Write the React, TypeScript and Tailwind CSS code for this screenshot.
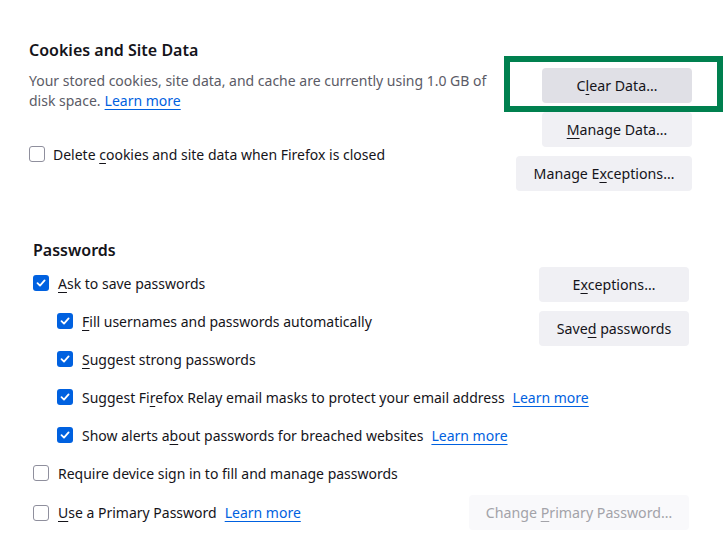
import React from "react";

const font = { fontFamily: '"Noto Sans", "Open Sans", sans-serif' };

function Check({ checked }: { checked?: boolean }) {
  if (checked) {
    return (
      <span className="flex h-4 w-4 shrink-0 items-center justify-center rounded-[3px] bg-[#0061e0]">
        <svg width="12" height="12" viewBox="0 0 12 12" fill="none">
          <path d="M2.5 6.2 L5 8.6 L9.6 3.4" stroke="white" strokeWidth="1.8" strokeLinecap="round" strokeLinejoin="round" />
        </svg>
      </span>
    );
  }
  return <span className="block h-4 w-4 shrink-0 rounded-[3px] border border-[#8f8f9d] bg-white" />;
}

function U({ children }: { children: React.ReactNode }) {
  return <span className="underline decoration-1 underline-offset-[3px]">{children}</span>;
}

function Link() {
  return <a className="ml-2 text-[#0061e0] underline decoration-1 underline-offset-[3px]">Learn more</a>;
}

function Btn({ children, w, hover, disabled }: { children: React.ReactNode; w: string; hover?: boolean; disabled?: boolean }) {
  const cls = disabled
    ? "bg-[#f9f9fb] text-[#a3a3a9]"
    : hover
    ? "bg-[#e0e0e6] text-[#15141a]"
    : "bg-[#f0f0f4] text-[#15141a]";
  return (
    <div className={`flex h-[35px] items-center justify-center rounded-[4px] text-[14.2px] ${w} ${cls}`}>
      <span className="whitespace-nowrap">{children}</span>
    </div>
  );
}

function Row({ checked, indent, className, children }: { checked?: boolean; indent?: boolean; className?: string; children: React.ReactNode }) {
  return (
    <div className={`flex h-[38px] items-center gap-[9px] ${indent ? "pl-6" : ""} ${className ?? ""}`}>
      <Check checked={checked} />
      <span className="whitespace-nowrap">{children}</span>
    </div>
  );
}

export default function App() {
  return (
    <div className="relative h-[534px] w-[727px] overflow-hidden bg-white text-[14px] text-[#15141a]" style={font}>
      {/* Cookies and Site Data */}
      <section className="pl-[29px] pr-[35px] pt-[39px]">
        <h2 className="h-[22px] text-[16px] font-semibold leading-[22px]">Cookies and Site Data</h2>
        <div className="mt-[7px] flex justify-between">
          <div>
            <p className="pt-[3px] leading-[20px] text-[#5b5b66] whitespace-nowrap">
              Your stored cookies, site data, and cache are currently using 1.0 GB of
              <br />
              disk space.
              <a className="ml-1 text-[#0061e0] underline decoration-1 underline-offset-[3px]">Learn more</a>
            </p>
            <div className="mt-[31px] flex h-6 items-center gap-2">
              <Check />
              <span className="whitespace-nowrap">
                Delete <U>c</U>ookies and site data when Firefox is closed
              </span>
            </div>
          </div>
          <div className="flex flex-col items-end gap-[9px]">
            <Btn w="w-[150px]" hover>
              C<U>l</U>ear Data…
            </Btn>
            <Btn w="w-[150px]">
              <U>M</U>anage Data…
            </Btn>
            <Btn w="w-[176px]">
              Manage E<U>x</U>ceptions…
            </Btn>
          </div>
        </div>
      </section>

      {/* focus highlight */}
      <div className="absolute left-[504px] top-[56px] h-[56px] w-[219px] border-[6px] border-[#00804f]" />

      {/* Passwords */}
      <section className="pl-[33px] pr-[38px] pt-[48px]">
        <h2 className="h-[22px] text-[16px] font-semibold leading-[22px]">Passwords</h2>
        <div className="mt-[3px] grid grid-cols-[1fr_auto]">
          <Row checked>
            <U>A</U>sk to save passwords
          </Row>
          <div className="row-span-3 mt-[3px] flex flex-col gap-[9px]">
            <Btn w="w-[150px]">
              E<U>x</U>ceptions…
            </Btn>
            <Btn w="w-[150px]">
              Save<U>d</U> passwords
            </Btn>
          </div>
          <Row checked indent>
            <U>F</U>ill usernames and passwords automatically
          </Row>
          <Row checked indent>
            <U>S</U>uggest strong passwords
          </Row>
          <Row checked indent className="col-span-2">
            Suggest Fi<U>r</U>efox Relay email masks to protect your email address
            <Link />
          </Row>
          <Row checked indent className="col-span-2">
            Show alerts a<U>b</U>out passwords for breached websites
            <Link />
          </Row>
          <Row className="col-span-2">Require device sign in to fill and manage passwords</Row>
        </div>
        <div className="flex h-[41px] items-center justify-between">
          <div className="flex items-center gap-[9px]">
            <Check />
            <span className="whitespace-nowrap">
              <U>U</U>se a Primary Password
              <Link />
            </span>
          </div>
          <Btn w="w-[220px]" disabled>
            Change <U>P</U>rimary Password…
          </Btn>
        </div>
      </section>
    </div>
  );
}
